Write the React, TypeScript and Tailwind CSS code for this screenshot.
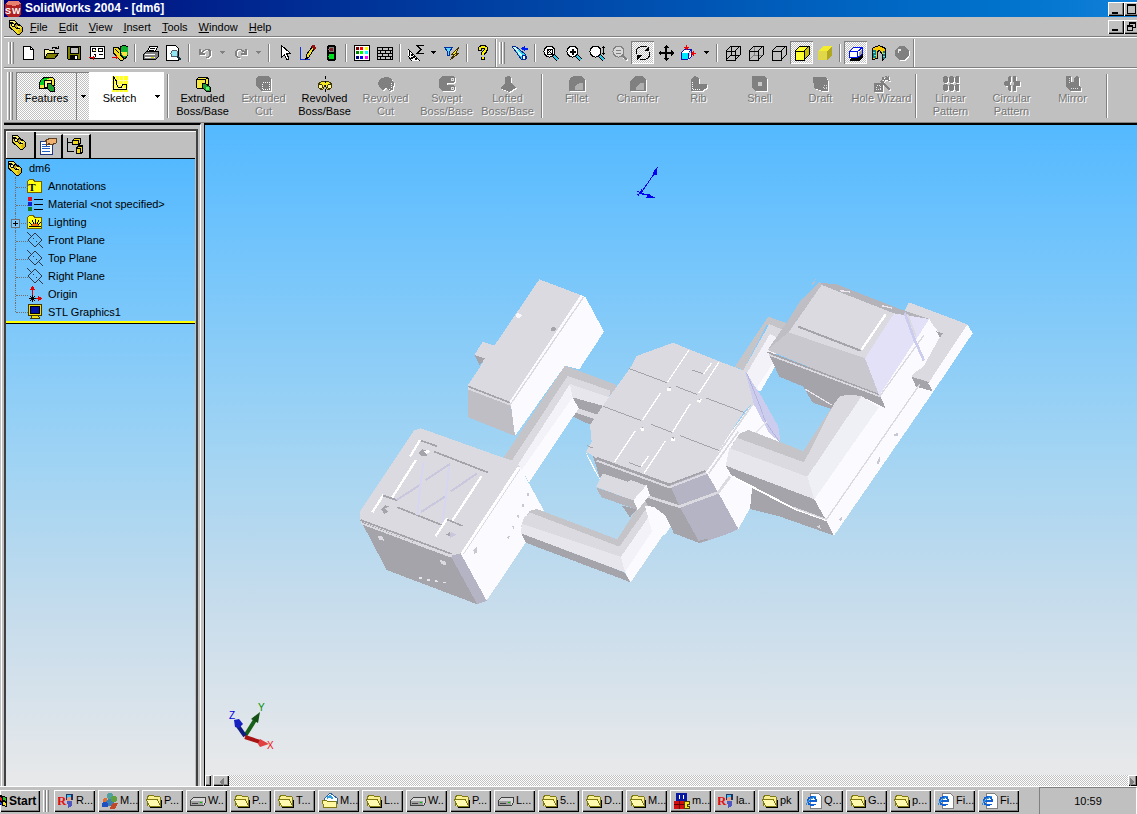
import React from "react";
import type { ReactNode } from "react";

const DITHER =
  "[background-image:repeating-conic-gradient(#ffffff_0_25%,#c0c0c0_0_50%)] bg-[length:2px_2px]";
const SKY =
  "[background-image:linear-gradient(to_bottom,#54b9ff_0%,#77c6fb_22%,#a2d4f3_50%,#c6dcec_73%,#e6e8ea_98%)]";
const RAISED =
  "bg-[#c0c0c0] shadow-[inset_1px_1px_0_#ffffff,inset_-1px_-1px_0_#000000,inset_-2px_-2px_0_#808080]";

type P = { children?: ReactNode };

function Ico({ children, size = 16 }: P & { size?: number }) {
  return (
    <svg
      width={size}
      height={size}
      viewBox="0 0 16 16"
      fill="none"
      stroke="none"
      shapeRendering="crispEdges"
      className="shrink-0"
      aria-hidden="true"
    >
      {children}
    </svg>
  );
}

/* ---------- shared glyphs ---------- */

const PartIcon = (
  <Ico>
    <path d="M1 1h5l3 3 5 4 1 4-3 3h-3L5 11 1 8z" fill="#f0dc20" stroke="#000" />
    <path d="M2 2l4 3 1 3-3-1zM8 8l4 2v4" fill="#fff68a" stroke="#000" />
    <path d="M8 4l3 3-2 3-3-3z" fill="#c0a010" stroke="#000" />
    <path d="M2 2h3l2 2M9 7l3 2" stroke="#fff68a" />
    <path d="M10 11l4-2v3l-3 3z" fill="#d8b810" />
  </Ico>
);

const cubeEdges = "M1 6h9v9h-9zM1 6l5-5h9v9l-5 5M10 6l5-5";

const magnifier = (inner: ReactNode) => (
  <Ico>
    <path d="M10 10l5 5" stroke="#000" strokeWidth="3" />
    <path d="M10 10l5 5" stroke="#30c8e8" strokeWidth="2" />
    <circle cx="6.500" cy="6.500" r="5.500" fill="#fff" stroke="#000" />
    {inner}
  </Ico>
);

/* ---------- standard toolbar ---------- */

const NewIcon = (
  <Ico>
    <path d="M3.500 1.500h7l3 3v10h-10z" fill="#fff" stroke="#000" />
    <path d="M10.500 1.500v3h3" stroke="#000" />
  </Ico>
);
const OpenIcon = (
  <Ico>
    <path d="M1.500 13.500v-9h4l1 1h5v3" fill="#ffffa0" stroke="#000" />
    <path d="M1.500 13.500l3-5h11l-4 5z" fill="#808000" stroke="#000" />
    <path d="M9 3.500q3-3 5 0M12 3.500h3v-3" stroke="#000" />
  </Ico>
);
const SaveIcon = (
  <Ico>
    <path d="M1.500 1.500h13v13h-12l-1-1z" fill="#808000" stroke="#000" />
    <path d="M4 2h8v6H4z" fill="#c0c0c0" stroke="#000" />
    <path d="M4 10h8v4H4z" fill="#000" />
    <path d="M9 11h2v3H9z" fill="#fff" />
  </Ico>
);
const DrawingIcon = (
  <Ico>
    <path d="M1.500 1.500h14v12h-14z" fill="#fff" stroke="#000" />
    <path d="M3.500 3.500h3v3h-3zM9.500 3.500h4v3h-4zM9.500 9.500h4M4.500 9.500h2v2" stroke="#000" />
    <path d="M6 5h1v1H6z" fill="#e0c000" />
    <path d="M0 12.500h6M4.500 11v4" stroke="#e00000" />
  </Ico>
);
const AssemblyIcon = (
  <Ico>
    <path d="M1 2h5l3 4 3 5-1 4H8L4 11 1 7z" fill="#f0dc20" stroke="#000" />
    <path d="M8 2l4-2 4 2v8l-3 4-4-3z" fill="#10b030" stroke="#000" />
    <path d="M9 7h6v4h-4z" fill="#ffe040" />
    <path d="M3 4l4 4M8 9l3 4" stroke="#000" />
    <path d="M0 12.500h6M4.500 10v4" stroke="#e00000" />
  </Ico>
);
const PrintIcon = (
  <Ico>
    <path d="M4.500 6.500l2-5h8l-2 5" fill="#fff" stroke="#000" />
    <path d="M7 3h5M6 5h5" stroke="#000" />
    <path d="M0.500 9.500l3-3h12v5l-3 3h-12z" fill="#808080" stroke="#000" />
    <path d="M2 9h10M2 12h10" stroke="#fff" />
    <path d="M8 12h3v1H8z" fill="#e0e000" />
  </Ico>
);
const PreviewIcon = (
  <Ico>
    <path d="M0.500 0.500h9l3 3v12h-12z" fill="#fff" stroke="#000" />
    <path d="M11 11l4 4" stroke="#103040" strokeWidth="2" />
    <circle cx="8.500" cy="8.500" r="3.500" fill="#90e8f0" stroke="#506070" />
  </Ico>
);
const undoShape = (
  <path d="M2 4h2v3l2-2 3-1h3l2 2v4l-2 3h-3v-1h2l1-2V7l-1-2H9L6 7 5 8h3v2H2z" />
);
const UndoIcon = (
  <Ico>
    <g transform="translate(1 1)" fill="#fff">
      {undoShape}
    </g>
    <g fill="#808080">{undoShape}</g>
  </Ico>
);
const RedoIcon = (
  <Ico>
    <g transform="matrix(-1 0 0 1 17 1)" fill="#fff">
      {undoShape}
    </g>
    <g transform="matrix(-1 0 0 1 16 0)" fill="#808080">
      {undoShape}
    </g>
  </Ico>
);
const SelectIcon = (
  <Ico>
    <path d="M4.500 0.500v12l3-3 2 5h2v-2l-2-4h4z" fill="#fff" stroke="#000" />
  </Ico>
);
const SketchPencil = (
  <Ico>
    <path d="M.500 2v12.500h9" stroke="#1030d0" />
    <path d="M6 14l1-5 5-7 2 2-5 8z" fill="#f0e020" stroke="#000" />
    <path d="M12 0h3l1 3-2 2-3-3z" fill="#901010" />
    <path d="M5 15l1-4 3 2z" fill="#000" />
  </Ico>
);
const TrafficIcon = (
  <Ico>
    <rect x="4" y="0" width="9" height="16" rx="3" fill="#000" />
    <circle cx="8.500" cy="4.500" r="2.500" fill="#802020" stroke="#808080" />
    <circle cx="8.500" cy="11.500" r="3" fill="#00e020" />
  </Ico>
);
const ColorsIcon = (
  <Ico>
    <path d="M.500 .500h15v15H.500z" fill="#fff" stroke="#000" />
    {[
      ["#800000", 2, 2], ["#ff0000", 6, 2], ["#ffff00", 11, 2],
      ["#008000", 2, 6], ["#00ff00", 6, 6], ["#00ffff", 11, 6],
      ["#000080", 2, 11], ["#0000ff", 6, 11], ["#ff00ff", 11, 11],
    ].map(([c, x, y]) => (
      <rect key={String(c)} x={x} y={y} width="3" height="3" fill={String(c)} />
    ))}
  </Ico>
);
const BricksIcon = (
  <Ico>
    <path d="M.500 2.500h15v12H.500zM0 5.500h16M0 8.500h16M0 11.500h16M5.500 2v3M11.500 2v3M3.500 6v3M8.500 6v3M13.500 6v3M5.500 9v3M11.500 9v3M3.500 12v3M8.500 12v3M13.500 12v3" stroke="#000" />
  </Ico>
);
const MeasureIcon = (
  <Ico>
    <path d="M0 4l12 12H4l-4-5z" fill="#fff" />
    <path d="M0 4l12 12M1.500 5v6M0 11l4 5M3 9h1v1H3zM5 11h1v1H5zM3 12h1v1H3zM7 13h1v1H7z" stroke="#000" />
    <path d="M16 2V.500H9l4 4-4 4h7V7" stroke="#000" />
  </Ico>
);
const FilterIcon = (
  <Ico>
    <path d="M.500 2.500h8l-3 4v4h-2v-4z" fill="#60d8ff" stroke="#0030a0" />
    <path d="M15 2l-7 7h3l-5 6 9-7h-3z" fill="#f8e818" stroke="#403000" />
  </Ico>
);
const HelpIcon = (
  <Ico>
    <path d="M5 6V4q0-2 3-2t3 2q0 2-3 4v2M8 12v3" stroke="#000" strokeWidth="4" />
    <path d="M5 5V4q0-2 3-2t3 2q0 2-3 4v2M8 12v2" stroke="#f8f000" strokeWidth="2" />
  </Ico>
);

/* ---------- view toolbar ---------- */

const FlashIcon = (
  <Ico>
    <path d="M0 1h3l10 8 2 4-2 2-4-1z" fill="#30d0f0" stroke="#002890" />
    <path d="M2 2l8 9" stroke="#d0ffff" strokeWidth="2" />
    <path d="M9 3.500l4-3v2h3v2h-3v2z" fill="#0020f0" />
    <path d="M10 11l2-1 2 2-1 2h-2z" fill="#fff" stroke="#002890" />
  </Ico>
);
const ZoomFit = magnifier(<path d="M4 4h5v5H4zM4 4l5 5M9 4L4 9" stroke="#000" />);
const ZoomArea = magnifier(<path d="M7 4v6M4 7h6" stroke="#000" strokeWidth="2" />);
const ZoomInOut = magnifier(<path d="M14.500 1v9M13 2.500h3M13 8.500h3" stroke="#000" />);
const ZoomSel = (
  <Ico>
    <path d="M11 12l5 4" stroke="#fff" strokeWidth="2" />
    <path d="M10 10l5 5" stroke="#808080" strokeWidth="2" />
    <circle cx="6.500" cy="6.500" r="5.500" fill="#d8d8d8" stroke="#808080" />
    <path d="M4 5.500h5M4 8.500h5" stroke="#808080" />
  </Ico>
);
const RotateIcon = (
  <Ico>
    <path d="M1.500 8.500V5q3-5 10-3M14.500 7v4q-3 5-10 3" stroke="#000" />
    <path d="M14 1v5H9zM2 15v-5h5z" fill="#000" />
  </Ico>
);
const PanIcon = (
  <Ico>
    <path d="M8 2v12M2 8h12" stroke="#000" strokeWidth="2" />
    <path d="M8 0l3 3H5zM8 16l3-3H5zM0 8l3-3v6zM16 8l-3-3v6z" fill="#000" />
  </Ico>
);
const ViewIcon = (
  <Ico>
    <path d="M.500 7.500h7v7h-7z" fill="#00e8ff" stroke="#1010b0" />
    <path d="M.500 7.500l3-3h7l-3 3M7.500 14.500l3-3v-7" fill="#fff" stroke="#1010b0" />
    <path d="M5.500 0v4M15 8.500h-4" stroke="#f00000" />
    <path d="M3 2h5L5.500 5zM13 6v5l-3-2.500z" fill="#f00000" />
  </Ico>
);
const WireIcon = (
  <Ico>
    <path d={cubeEdges + "M6 1v9h9M6 10l-5 5"} stroke="#000" />
  </Ico>
);
const HiddenVisIcon = (
  <Ico>
    <path d="M6 1v9h9M6 10l-5 5" stroke="#808080" />
    <path d={cubeEdges} stroke="#000" />
  </Ico>
);
const HiddenRemIcon = (
  <Ico>
    <path d={cubeEdges} stroke="#000" />
  </Ico>
);
const ShadedEdges = (
  <Ico>
    <path d="M1 6l5-5h9v9l-5 5H1z" fill="#ffff30" />
    <path d="M10 6l5-5v9l-5 5z" fill="#c8c000" />
    <path d={cubeEdges} stroke="#000" />
  </Ico>
);
const ShadedIcon = (
  <Ico>
    <path d="M1 6l5-5h9v9l-5 5H1z" fill="#f4ec30" />
    <path d="M10 6l5-5v9l-5 5z" fill="#b0a820" />
    <path d="M1 6h9v9H1z" fill="#e0d848" />
  </Ico>
);
const ShadowIcon = (
  <Ico>
    <path d="M3 12h8l4-3v4l-4 3H2z" fill="#000" />
    <path d="M1.500 6.500h8v6h-8zM1.500 6.500l4-4h9v6l-5 4M9.500 6.500l5-4" fill="#fff" stroke="#0010f0" />
    <path d="M11 7l3-3v4l-3 3z" fill="#a0a0a0" />
  </Ico>
);
const SectionIcon = (
  <Ico>
    <path d="M1.500 3.500q5-4 9-2l4 2v9l-3 3v-6l-3-4-2 1v7l-5 1z" fill="#f8c800" stroke="#000" />
    <path d="M2 5h3v8H2zM12 6h2v8h-2z" fill="#108080" />
    <path d="M2 7h2M3 10h2M12 8h2M12 11h2" stroke="#40f0f0" />
  </Ico>
);
const SphereIcon = (
  <Ico>
    <circle cx="9" cy="9" r="7" fill="#fff" />
    <circle cx="8" cy="8" r="7" fill="#808080" />
    <path d="M4 4h3v2H5v2H4z" fill="#e8e8e8" />
  </Ico>
);

/* ---------- feature bar ---------- */

const FeaturesIcon = (
  <Ico>
    <path d="M0.500 9.500q0-8 7-8h6l2 2v6l-8 3h-7z" fill="#f4e840" stroke="#000" />
    <path d="M1 9q0-7 7-7h4q-6 1-7 7z" fill="#00d020" />
    <path d="M5.500 4.500h7v7h-7z" fill="#fff890" stroke="#000" />
    <path d="M8 7l4 1 3 3v4h-4l-3-3z" fill="#20a030" stroke="#000" />
  </Ico>
);
const SketchIcon = (
  <Ico>
    <path d="M0 0h16v16H0z" fill="#ffff20" />
    <path d="M3.500 0v16M7.500 0v16M11.500 0v16M0 4.500h16M0 8.500h16M0 12.500h16" stroke="#fff8a8" />
    <path d="M1.500 0v13.500h13V8.500h-4l-1 3h-3l-2-3V5l-3-4" stroke="#000" />
  </Ico>
);
const ExtrudeIcon = (
  <Ico>
    <path d="M1.500 3.500l2-2h9l1 2v6l-3 3h-8l-1-1z" fill="#f4e840" stroke="#000" />
    <path d="M1.500 3.500h9v9M10.500 3.500l2-2" stroke="#000" />
    <path d="M7 7l3 0 5 4v4h-4l-4-4z" fill="#20a030" stroke="#000" />
    <path d="M11 11h3v3h-3z" fill="#60f070" />
  </Ico>
);
const RevolveIcon = (
  <Ico>
    <path d="M1 10q1-5 7-5t7 5l-2 3h-3l-2-4-2 4H3z" fill="#f4e820" stroke="#403800" />
    <circle cx="3.500" cy="10.500" r="2" fill="#fff8a0" stroke="#403800" />
    <circle cx="12.500" cy="10.500" r="2" fill="#fff8a0" stroke="#403800" />
    <path d="M8.500 0v3M8.500 5v2M8.500 9v2M8.500 13v3" stroke="#000" />
  </Ico>
);

const GREY: Record<string, ReactNode> = {
  cut: (
    <>
      <path d="M0 2l2-2h10l3 3v12H6l-6-5z" fill="#808080" />
      <path d="M6.500 6.500h7v7h-7z" stroke="#fff" strokeDasharray="1 1" />
    </>
  ),
  revcut: (
    <>
      <path d="M0 7l3-5 5-1 5 1 3 5-1 7-4 1-3-4-2 3H4l-3-3z" fill="#808080" />
      <path d="M13.500 7v5M11.500 13v1" stroke="#fff" strokeDasharray="1 1" />
    </>
  ),
  swept: (
    <>
      <path d="M3 0h11l2 2v4l-3 1H8v2h6l2 2v3l-2 1H3l-3-4V4z" fill="#808080" />
      <path d="M12.500 2.500h2v2h-2zM12.500 11.500h2v2h-2z" stroke="#e0e0e0" />
    </>
  ),
  lofted: <path d="M5 1l3-1 3 1v6l5 5-7 4-9-4 5-4z" fill="#808080" />,
  fillet: (
    <>
      <path d="M0 15V6q1-6 7-6h5l4 4v11z" fill="#808080" />
      <path d="M6 14V11q1-4 8-4v7z" fill="#b0b0b0" />
    </>
  ),
  chamfer: (
    <>
      <path d="M0 15V5l5-5h7l4 4v11z" fill="#808080" />
      <path d="M6 14v-3l4-4h4v7z" fill="#b0b0b0" />
    </>
  ),
  rib: (
    <>
      <path d="M0 15V3l4-3 4 2v6h8v4l-5 3z" fill="#808080" />
      <path d="M1.500 6v7.500h8" stroke="#fff" strokeDasharray="1 1" />
    </>
  ),
  shell: (
    <>
      <path d="M0 0h12l3 3v12H4l-4-3z" fill="#808080" />
      <path d="M6 6h4v4H6z" fill="#c8c8c8" />
    </>
  ),
  draft: (
    <>
      <path d="M0 1h13l2 4v10H9l-8-3z" fill="#808080" />
      <path d="M10.500 9.500h3v3h-3z" stroke="#d8d8d8" strokeDasharray="1 1" />
    </>
  ),
  wizard: (
    <>
      <path d="M0 7h9v9H0z" fill="#808080" />
      <path d="M2.500 9.500h4v4h-4z" stroke="#e8e8e8" strokeDasharray="1 1" />
      <path d="M7 5l9 9M9 1v3M12 0l3 5M15 1l-5 3M8 6h2" stroke="#808080" strokeWidth="2" />
    </>
  ),
  linear: (
    <path d="M1 0h3v7H1zM7 0h3v7H7zM13 0h3v7h-3zM1 8h3v7H1zM7 8h3v7H7zM13 8h3v7h-3zM0 1h5v5H0zM6 1h5v5H6zM12 1h4v5h-4zM0 9h5v5H0zM6 9h5v5H6zM12 9h4v5h-4z" fill="#808080" />
  ),
  circular: (
    <path d="M4 1l1-1h2v6H5L4 5zM9 0h2l1 1v4l-1 1H9zM5 9h2v6H5l-1-1v-4zM9 9h2l1 1v4l-1 1H9zM1 5h5v5H1L0 9V6zM10 5h5l1 1v3l-1 1h-5z" fill="#808080" />
  ),
  mirror: (
    <>
      <path d="M1 0h5v6h3V2l3-2 2 2v8l2 1v4H5l-4-4z" fill="#808080" />
      <path d="M6 12.500h8M4.500 2v5" stroke="#e0e0e0" strokeDasharray="1 1" />
    </>
  ),
};

const greyIcon = (k: string) => (
  <span className="drop-shadow-[1px_1px_0_#ffffff]">
    <Ico>{GREY[k]}</Ico>
  </span>
);

/* ---------- small controls ---------- */

function Tool({ label, children, on }: P & { label: string; on?: boolean }) {
  return (
    <button
      type="button"
      aria-label={label}
      className={
        "flex h-[23px] w-[23px] shrink-0 items-center justify-center " +
        (on ? DITHER + " shadow-[inset_1px_1px_0_#808080,inset_-1px_-1px_0_#ffffff]" : "")
      }
    >
      {children}
    </button>
  );
}

function Caret({ grey }: { grey?: boolean }) {
  return (
    <svg width="5" height="3" viewBox="0 0 5 3" shapeRendering="crispEdges" aria-hidden="true">
      <path d="M0 0h5v1H0zM1 1h3v1H1zM2 2h1v1H2z" fill={grey ? "#808080" : "#000"} />
    </svg>
  );
}

function Drop({ label, grey }: { label: string; grey?: boolean }) {
  return (
    <button type="button" aria-label={label} className="flex h-[23px] w-[13px] shrink-0 items-center pl-1">
      <Caret grey={grey} />
    </button>
  );
}

function Sep({ tall }: { tall?: boolean }) {
  return (
    <div className="flex w-2 shrink-0 justify-center">
      <div className={"w-[2px] border-l border-[#808080] bg-white " + (tall ? "h-11" : "h-[18px]")} />
    </div>
  );
}

function Grip({ h }: { h: string }) {
  return (
    <div className="flex shrink-0">
      <div className={"w-[3px] border-r border-[#808080] border-l border-l-white " + h} />
      <div className={"w-[3px] border-r border-[#808080] border-l border-l-white " + h} />
    </div>
  );
}

function WinButton({ label, children }: P & { label: string }) {
  return (
    <button type="button" aria-label={label} className={"h-[14px] w-4 shrink-0 " + RAISED}>
      <svg width="16" height="14" viewBox="0 0 16 14" shapeRendering="crispEdges" fill="none" aria-hidden="true">
        {children}
      </svg>
    </button>
  );
}

function Feature({ icon, l1, l2, on }: { icon: ReactNode; l1: string; l2?: string; on?: boolean }) {
  return (
    <button
      type="button"
      disabled={!on}
      className={
        "flex w-[61px] shrink-0 flex-col items-center pt-[7px] leading-[13px] whitespace-nowrap " +
        (on ? "text-black" : "text-[#767676] [text-shadow:1px_1px_0_#ffffff]")
      }
    >
      {icon}
      <span>{l1}</span>
      {l2 && <span>{l2}</span>}
    </button>
  );
}

/* ---------- feature tree ---------- */

const PlaneIcon = (
  <Ico>
    <path d="M8 1l7 7-7 7-7-7z" stroke="#303848" />
    <path d="M0 0l4 4M12 12l4 4M6 6l1 1M9 9l1 1" stroke="#303848" />
  </Ico>
);
const folderShape = <path d="M.500 3.500l2-2h4l1 2h7v11H.500z" fill="#ffff10" stroke="#706000" />;

const TREE: { name: string; icon: ReactNode; plus?: boolean }[] = [
  {
    name: "Annotations",
    icon: (
      <Ico>
        {folderShape}
        <text x="5" y="13" textAnchor="middle" fontSize="11" fontWeight="bold" fontFamily="Liberation Serif, serif" fill="#000">
          T
        </text>
      </Ico>
    ),
  },
  {
    name: "Material <not specified>",
    icon: (
      <Ico>
        <path d="M7 3.500h9M7 8.500h9M7 13.500h9" stroke="#000" />
        <circle cx="3" cy="3" r="2.500" fill="#e01020" />
        <circle cx="3" cy="8" r="2.500" fill="#1020d0" />
        <circle cx="3" cy="13" r="2.500" fill="#108020" />
      </Ico>
    ),
  },
  {
    name: "Lighting",
    plus: true,
    icon: (
      <Ico>
        {folderShape}
        <path d="M4 13q0-4 4-4t4 4z" fill="#f07010" />
        <path d="M2 8l3 3M5 6l2 4M8 5v5M12 6l-2 4M14 8l-3 3M2 12.500h12" stroke="#000" />
      </Ico>
    ),
  },
  { name: "Front Plane", icon: PlaneIcon },
  { name: "Top Plane", icon: PlaneIcon },
  { name: "Right Plane", icon: PlaneIcon },
  {
    name: "Origin",
    icon: (
      <Ico>
        <path d="M5.500 10V2M8 12.500h5" stroke="#e00000" />
        <path d="M5.500 0l3 4h-6zM15 12.500l-4-3v6z" fill="#e00000" />
        <path d="M3 10l5 5M8 10l-5 5M5.500 9v7M2 12.500h7" stroke="#000" />
      </Ico>
    ),
  },
  {
    name: "STL Graphics1",
    icon: (
      <Ico>
        <path d="M1.500 .500h13v11h-13zM3.500 14.500l2-3h6l1 3z" fill="#f0e010" stroke="#403800" />
        <path d="M3.500 2.500h9v7h-9z" fill="#0010a0" stroke="#000" />
      </Ico>
    ),
  },
];

function FeatureTree() {
  return (
    <div className="pl-px text-[11px] leading-[18px]">
      <div className="flex h-[18px] items-center gap-[6px]">
        {PartIcon}
        <span>dm6</span>
      </div>
      <ul>
        {TREE.map((n, i) => (
          <li key={n.name} className="flex h-[18px] items-center">
            <span
              className={
                "relative ml-2 w-3 shrink-0 border-l border-dotted border-[#707070] " +
                (i === TREE.length - 1 ? "mb-[9px] h-[9px]" : "h-[18px]")
              }
            >
              <span
                className={
                  "absolute left-0 w-3 border-t border-dotted border-[#707070] " +
                  (i === TREE.length - 1 ? "top-[9px]" : "top-[10px]")
                }
              />
              {n.plus && (
                <svg
                  width="9"
                  height="9"
                  viewBox="0 0 9 9"
                  shapeRendering="crispEdges"
                  className="absolute top-[6px] -left-[5px]"
                  aria-hidden="true"
                >
                  <path d="M.500 .500h8v8h-8z" fill="#7cc8fc" stroke="#707070" />
                  <path d="M2 4.500h5M4.500 2v5" stroke="#000" />
                </svg>
              )}
            </span>
            {n.icon}
            <span className="pl-[5px] whitespace-nowrap">{n.name}</span>
          </li>
        ))}
      </ul>
    </div>
  );
}

/* ---------- 3D model ---------- */

type Facet = [string, string];
const Facets = ({ list }: { list: Facet[] }) => (
  <>
    {list.map(([fill, points]) => (
      <polygon key={fill + points} fill={fill} points={points} />
    ))}
  </>
);
const Strokes = ({ list }: { list: [string, number, string][] }) => (
  <g fill="none">
    {list.map(([c, w, d]) => (
      <path key={c + d} stroke={c} strokeWidth={w} d={d} />
    ))}
  </g>
);

const TOP = "#dbdae0";
const MID = "#c5c4c9";
const DARK = "#a5a4aa";
const LIT = "#fbfaff";
const SOFT = "#e7e6ec";
const PALE = "#f3f2f9";
const LAV = "#ccccee";

const leftFacets: Facet[] = [
  [TOP, "598,28 722,75 730,90 513,410 383,358 383,347 430,275 403,255 428,215 463,227"],
  [DARK, "403,255 435,265 419,287"],
  [LIT, "722,75 737,82 792,185 718,298 675,287 525,498 513,405 508,396"],
  ["#bfbec4", "383,355 513,408 525,498 385,442"],
  [MID, "487,568 675,287 830,345 815,378 683,318 515,580"],
  [TOP, "510,580 683,318 812,362 806,384 690,342 540,592"],
  [SOFT, "690,342 808,382 792,410 698,382"],
  [DARK, "698,382 790,408 775,435 714,414"],
  [TOP, "714,414 775,435 765,452 706,428"],
  [DARK, "706,428 765,448 752,465 700,440"],
  [PALE, "690,342 698,382 550,606 530,590"],
  [LIT, "698,382 716,415 567,637 545,600"],
  [LIT, "540,590 565,637 612,722 548,760 557,818 440,992 345,852"],
  [TOP, "60,725 222,482 243,475 495,565 525,575 540,590 360,855 335,865 62,760"],
  [DARK, "64,755 335,860 412,1003 140,900"],
  ["#b5b4c4", "332,858 362,850 440,992 412,1003"],
  [MID, "555,745 570,722 590,717 832,808 840,835"],
  [TOP, "552,742 572,728 838,830 843,862 543,770"],
  [SOFT, "546,762 843,860 855,907 543,790"],
  [DARK, "543,790 853,907 872,937 557,818"],
  [MID, "832,808 910,685 940,700 838,830"],
  [TOP, "838,830 930,700 965,712 843,860"],
  [PALE, "843,860 950,706 992,728 855,907"],
  [LIT, "855,907 978,720 990,765 872,937"],
];

const leftStrokes: [string, number, string][] = [
  [TOP, 4, "M730 82L512 402"],
  [DARK, 5, "M384 349L510 398"],
  [TOP, 4, "M383 356L512 405"],
  [DARK, 5, "M62 750L335 852"],
  [TOP, 5, "M64 760L335 861"],
  ["#ffffff", 6, "M535 592L365 850"],
  [TOP, 3, "M541 596L371 852"],
  ["#ffffff", 7, "M240 510L210 560M228 570L155 685M130 675L97 727M425 618L335 755M322 745L287 798"],
  [DARK, 5, "M243 512L292 529M283 545L445 608M130 677L175 692M172 712L305 765M320 748L368 768"],
  ["#c8c7dd", 6, "M170 690L243 643M257 630L330 582M243 726L318 678M333 664L410 611"],
  ["#d6d5f2", 6, "M250 575L242 640L232 735M327 590L318 678L307 760"],
];

const leftHoles: Facet[] = [
  ["#f8f8fc", "527,133 535,128 545,136 538,144 530,142"],
  [DARK, "632,176 640,170 650,174 645,184 634,183"],
  [DARK, "236,548 246,538 262,540 262,556 245,560"],
  ["#ffffff", "252,545 264,538 270,546 258,552"],
  [DARK, "124,718 134,706 150,708 146,724 132,732"],
  [TOP, "134,716 150,708 146,724"],
  [DARK, "318,794 330,785 334,800"],
  ["#c8c7dd", "332,786 350,794 330,805"],
  [TOP, "112,797 128,800 132,812 118,810"],
  [TOP, "300,870 316,874 320,886 304,882"],
  ["#c8c7d2", "400,840 412,830 412,846 402,854"],
  [SOFT, "236,922 246,922 248,928 238,928"],
  [SOFT, "262,926 270,928 270,932 262,932"],
  [SOFT, "286,930 294,932 294,936 286,936"],
  [SOFT, "310,935 318,936 318,940 310,940"],
  ["#c8c7d2", "562,670 567,670 566,678 561,678"],
  ["#c8c7d2", "546,702 553,702 552,710 547,710"],
  ["#c8c7d2", "532,735 538,734 538,744 533,744"],
  ["#c8c7d2", "517,768 523,766 523,776 518,776"],
  ["#c8c7d2", "502,800 509,798 508,808 503,808"],
];

const rightBack: Facet[] = [
  [MID, "45,290 145,140 215,165 195,195 140,165 70,300"],
  [TOP, "70,300 148,162 200,185 165,205 150,192 80,310"],
  [PALE, "80,310 150,192 170,202 165,290 120,365 95,350"],
  [LIT, "165,270 165,290 120,367 112,352"],
  [DARK, "250,350 300,340 380,380 333,417 278,398"],
  [DARK, "35,618 320,740 342,797 175,738 85,716"],
  [LIT, "758,190 640,365 342,797 315,745 283,688 400,400 478,378 560,200 628,150"],
  [TOP, "567,97 742,163 625,345 575,320 600,280 660,200 650,178 625,148 552,125"],
  [DARK, "575,320 625,336 638,364 588,350"],
  [LIT, "742,163 758,190 640,365 625,340"],
  [LIT, "628,147 660,200 610,290 480,378 540,250"],
  [DARK, "143,244 478,372 497,415 425,380 360,378 335,405 300,365 250,350 178,320"],
  ["#b4b3b9", "300,38 350,43 552,122 628,147 522,134 305,48"],
  ["#bfbec4", "300,36 243,90 205,150 143,240 210,190 308,46"],
  [TOP, "305,45 522,130 435,265 205,188"],
  ["#c9c8ce", "143,240 205,187 435,265 478,377"],
  ["#e2e1f7", "435,265 522,130 628,147 478,377"],
  ["#bfbec4", "272,48 288,26 284,40"],
  [DARK, "648,183 668,190 660,202"],
];

const rightBackStrokes: [string, number, string][] = [
  [DARK, 6, "M235 170L422 242"],
  ["#ffffff", 7, "M424 240L497 133"],
  [DARK, 4, "M143 246L478 374"],
  [TOP, 5, "M146 254L482 380"],
  [TOP, 4, "M480 378L612 195M318 750L600 342"],
  [LAV, 8, "M554 128L582 205L612 272"],
  [TOP, 5, "M562 132L588 200"],
  ["#e8e8ee", 4, "M360 62L390 66M485 107L515 114M255 357L335 405"],
];

const centerFacets: Facet[] = [
  [LIT, "550,395 590,455 632,518 560,530 540,715 505,777 445,668 400,600"],
  [LAV, "525,303 575,380 625,470 632,518 598,490 550,400"],
  ["#ffffff", "48,545 66,580 90,628 82,618 52,560"],
  [DARK, "68,555 300,636 330,712 390,820 312,790 300,762 240,700 88,620"],
  [DARK, "225,650 300,648 330,712 312,790 285,735 230,705"],
  ["#b5b4c4", "298,640 405,600 445,668 505,777 470,793 390,820 330,712"],
  [TOP, "310,218 355,237 450,275 525,303 550,395 520,428 408,603 298,640 80,565 48,545 65,515 60,465 100,405 180,295 200,258"],
  [LIT, "225,708 250,710 285,735 302,770 285,795 250,800"],
  [DARK, "155,706 200,718 180,742"],
  [TOP, "98,610 172,635 182,630 232,648 190,692 78,650"],
  ["#b4b3b9", "78,652 192,692 203,720 95,682"],
  [LIT, "190,690 230,645 240,675 203,720"],
];

const centerStrokes: [string, number, string][] = [
  [DARK, 5, "M80 563L298 643L408 602"],
  [TOP, 6, "M80 572L298 652L410 609"],
  [TOP, 8, "M235 680L328 710L445 667L480 620"],
  [TOP, 5, "M408 603L550 400M416 610L505 485"],
  ["#b4b3d8", 3, "M530 308L590 460L630 518"],
  [DARK, 3, "M178 296L290 338M318 349L380 373M408 384L522 427M100 409L214 452M243 463L306 487M330 497L448 542M367 300L400 312M178 578L212 591M50 527L70 535"],
  ["#ffffff", 4, "M357 240L293 336M447 277L386 370M272 368L218 450M361 401L307 487M196 482L133 577M286 513L222 610M424 280L400 313M236 558L213 590"],
  [SOFT, 4, "M555 490L590 455"],
  [DARK, 5, "M310 785L385 815L415 808"],
];

const centerHoles: Facet[] = [
  ["#ffffff", "290,355 304,352 302,364 292,362"],
  ["#ffffff", "380,390 396,387 390,398 382,396"],
  ["#ffffff", "211,475 223,472 222,484 213,482"],
  ["#ffffff", "302,505 315,503 313,515 304,513"],
  [DARK, "296,352 302,352 300,357"],
  [DARK, "386,387 392,387 390,393"],
  [DARK, "215,472 220,472 219,477"],
  [DARK, "306,502 312,502 310,507"],
];

const rightFront: Facet[] = [
  [MID, "35,525 60,490 85,480 250,543 252,577 50,505"],
  [TOP, "25,545 50,503 252,577 262,620 30,540"],
  [SOFT, "28,534 262,620 283,688 17,587"],
  [DARK, "17,587 283,688 318,750 36,618"],
  [MID, "250,543 335,412 345,405 252,577"],
  [TOP, "252,577 340,405 360,378 395,374 430,380 262,620"],
  ["#eff0f6", "262,620 425,378 480,415 283,688"],
  [LIT, "283,688 478,410 500,420 318,748"],
];

const rightHoles: Facet[] = [
  ["#c8c7d2", "520,494 536,488 534,498 524,500"],
  ["#c8c7d2", "471,578 479,560 480,572 474,584"],
  ["#c8c7d2", "358,748 366,738 368,748 362,754"],
  [TOP, "290,768 300,766 302,776 294,774"],
];

function ModelView() {
  return (
    <svg
      viewBox="0 0 932 650"
      preserveAspectRatio="xMinYMin meet"
      className="h-full w-full"
      shapeRendering="crispEdges"
      role="img"
      aria-label="dm6 model"
    >
      <g transform="translate(-205 -125)">
        <g transform="translate(340 270) scale(0.33333)">
          <Facets list={leftFacets} />
          <Strokes list={leftStrokes} />
          <Facets list={leftHoles} />
        </g>
        <g transform="translate(720 270) scale(0.33333)">
          <Facets list={rightBack} />
          <Strokes list={rightBackStrokes} />
        </g>
        <g transform="translate(570 270) scale(0.33333)">
          <Facets list={centerFacets} />
          <Strokes list={centerStrokes} />
          <Facets list={centerHoles} />
        </g>
        <g transform="translate(720 270) scale(0.33333)">
          <Facets list={rightFront} />
          <Strokes list={[["#ffffff", 6, "M38 620L220 715L318 750"], [TOP, 4, "M220 712L318 748"]]} />
          <Facets list={rightHoles} />
        </g>

        <g stroke="#0000f0" fill="#0000f0">
          <path d="M641 193L656 171M641 193L651 196" fill="none" />
          <path d="M657 168l-4 5 3 2zM653 197l-5-3-1 3z" />
          <path d="M637 191l7 4M642 189l-4 7M637 195l5-3" fill="none" />
        </g>

        <g fill="none" shapeRendering="auto">
          <path d="M245 736L255 720" stroke="#186018" strokeWidth="4" />
          <path d="M260 712l-9 7 7 4z" fill="#145014" />
          <path d="M245 736L238 726" stroke="#101c80" strokeWidth="4" />
          <path d="M234 720l5-1 4 5-4 4-4-1z" fill="#1820c0" />
          <path d="M245 737L260 742" stroke="#a81414" strokeWidth="4" />
          <path d="M269 744l-9 3-2-3 2-5z" fill="#e04040" />
        </g>
        <g fontFamily="Liberation Sans, Arial, sans-serif" fontSize="10">
          <text x="258" y="711" fill="#009000">Y</text>
          <text x="267" y="749" fill="#f01010">X</text>
          <text x="229" y="719" fill="#0000e0">Z</text>
        </g>
      </g>
    </svg>
  );
}

/* ---------- taskbar ---------- */

const folderOpen = (
  <>
    <path d="M1.500 12.500v-9l2-1h4l1 1h5l1 1v9" fill="#f8f090" stroke="#807810" />
    <path d="M.500 6.500h11l3 7h-11z" fill="#fffab0" stroke="#807810" />
    <path d="M4 14.500h11v-8" stroke="#000" />
  </>
);
const TASK_ICONS: Record<string, ReactNode> = {
  folder: <Ico>{folderOpen}</Ico>,
  mail: (
    <Ico>
      <path d="M2 6l6-6 7 5v5H4z" fill="#fff" stroke="#3060a0" />
      <path d="M5 5l3-2 3 3" stroke="#30a0e0" strokeWidth="2" />
      <path d="M.500 7.500h4l1 1h9v6h-13z" fill="#fff8a0" stroke="#807810" />
    </Ico>
  ),
  drive: (
    <Ico>
      <path d="M.500 7.500l3-3h12v5l-2 3H.500z" fill="#d8d8d8" stroke="#404040" />
      <path d="M1 8h12v4H1z" fill="#a0a0a0" />
      <path d="M2 10h6" stroke="#404040" />
      <path d="M10 9h2v1h-2z" fill="#00c000" />
    </Ico>
  ),
  rh: (
    <Ico>
      <path d="M8 1h7v6H8z" fill="#203060" />
      <path d="M9 2h4v3H9z" fill="#40c0f0" />
      <path d="M9 7l5 1v5l-4 2z" fill="#5058c0" />
      <circle cx="11" cy="6" r="2" fill="#e8a080" />
      <text x="-1" y="12" fontSize="13" fontWeight="bold" fontFamily="Liberation Serif, serif" fill="#e01010">
        R
      </text>
    </Ico>
  ),
  msn: (
    <Ico>
      <circle cx="8" cy="3" r="3" fill="#50a0a0" />
      <path d="M4 8q4-4 8 0v5H4z" fill="#4080b0" />
      <circle cx="3" cy="7" r="2" fill="#e07030" />
      <path d="M0 10q3-3 6 0v4H0z" fill="#2050c0" />
      <circle cx="12" cy="6" r="3" fill="#60a040" />
      <path d="M8 16q1-7 8-6l-3 6z" fill="#c04828" />
    </Ico>
  ),
  gift: (
    <Ico>
      <path d="M2 0h11v8H2z" fill="#0818a0" />
      <path d="M5.500 2v4M9.500 2v4" stroke="#fff" />
      <path d="M0 8h10v8H0z" fill="#d01010" />
      <path d="M5 8v8M0 11.500h10" stroke="#600000" />
      <path d="M11 8h4v3h-2v2h2v2h-5v-4z" fill="#f8e820" stroke="#504000" />
    </Ico>
  ),
  ie: (
    <Ico>
      <path d="M4.500 .500h8l3 3v12h-11z" fill="#fff" stroke="#808080" />
      <circle cx="6" cy="8" r="4" stroke="#1060d0" strokeWidth="2" />
      <path d="M3 8h7" stroke="#1060d0" strokeWidth="2" />
      <path d="M8 9h4v2H8z" fill="#fff" />
      <path d="M0 13Q-1 9 10 3" stroke="#2890e8" />
    </Ico>
  ),
};

const TASKS: [string, string][] = [
  ["rh", "R..."], ["msn", "M..."], ["folder", "P..."], ["drive", "W.."],
  ["folder", "P..."], ["folder", "T..."], ["mail", "M..."], ["folder", "L..."],
  ["drive", "W.."], ["folder", "P..."], ["drive", "L..."], ["folder", "5..."],
  ["folder", "D..."], ["folder", "M..."], ["gift", "m..."], ["rh", "la.."],
  ["folder", "pk"], ["ie", "Q..."], ["folder", "G..."], ["folder", "p..."],
  ["ie", "Fi..."], ["ie", "Fi..."],
];

const MENUS = ["File", "Edit", "View", "Insert", "Tools", "Window", "Help"];

export default function App() {
  return (
    <div className="flex h-screen flex-col overflow-hidden bg-[#c0c0c0] font-['Liberation_Sans',Arial,sans-serif] text-[11px] text-black">
      <div className="flex min-h-0 flex-1 flex-col border-l border-[#c0c0c0] pl-[3px] shadow-[inset_1px_0_0_#ffffff]">
        {/* title bar */}
        <header className="flex h-[17px] shrink-0 items-center bg-linear-to-r from-[#00007b] to-[#1080d8] pl-px">
          <Ico>
            <path d="M0 3l4-3h9l3 3v10l-3 3H3l-3-3z" fill="#b02020" />
            <path d="M0 3l4-3h9l3 3-7 2z" fill="#e88070" />
            <text x="0" y="13" fontSize="9" fontWeight="bold" fontFamily="Liberation Sans, sans-serif" fill="#fff">
              S
            </text>
            <text x="7" y="13" fontSize="9" fontWeight="bold" fontFamily="Liberation Sans, sans-serif" fill="#fff">
              W
            </text>
          </Ico>
          <h1 className="pb-px pl-1 text-xs leading-4 font-bold text-white">SolidWorks 2004 - [dm6]</h1>
          <div className="-mr-[3px] ml-auto flex">
            <WinButton label="Minimize">
              <path d="M4 10h6v2H4z" fill="#000" />
            </WinButton>
            <WinButton label="Maximize">
              <path d="M3.500 3v8.500h8V3M3 3h9" stroke="#000" />
              <path d="M3 2h9v2H3z" fill="#000" />
            </WinButton>
          </div>
        </header>

        {/* menu bar */}
        <nav className="flex h-5 shrink-0 items-center border-b border-[#808080] pl-1">
          {PartIcon}
          <div className="flex gap-[11px] pl-[6px]">
            {MENUS.map((m) => (
              <button key={m} type="button" className="leading-4">
                <span className="underline underline-offset-1">{m[0]}</span>
                {m.slice(1)}
              </button>
            ))}
          </div>
          <div className="-mr-[3px] ml-auto flex">
            <WinButton label="Minimize document">
              <path d="M4 9h6v2H4z" fill="#000" />
            </WinButton>
            <WinButton label="Restore document">
              <path d="M5.500 2.500h6v5h-6zM5 3h7" stroke="#000" />
              <path d="M3.500 5.500h5v5h-5z" fill="#c0c0c0" stroke="#000" />
              <path d="M3 6h6" stroke="#000" />
            </WinButton>
          </div>
        </nav>

        {/* standard + view toolbars */}
        <div className="flex h-[31px] shrink-0 items-center border-t border-b border-t-white border-b-[#808080] pl-1">
          <Grip h="h-[22px]" />
          <div className="mr-px ml-[2px] flex items-center">
            <Tool label="New">{NewIcon}</Tool>
            <Tool label="Open">{OpenIcon}</Tool>
            <Tool label="Save">{SaveIcon}</Tool>
            <Tool label="Make drawing">{DrawingIcon}</Tool>
            <Tool label="Make assembly">{AssemblyIcon}</Tool>
            <Sep />
            <Tool label="Print">{PrintIcon}</Tool>
            <Tool label="Print preview">{PreviewIcon}</Tool>
            <Sep />
            <Tool label="Undo">{UndoIcon}</Tool>
            <Drop label="Undo list" grey />
            <Tool label="Redo">{RedoIcon}</Tool>
            <Drop label="Redo list" grey />
            <Sep />
            <Tool label="Select">{SelectIcon}</Tool>
            <Tool label="Sketch">{SketchPencil}</Tool>
            <Tool label="Rebuild">{TrafficIcon}</Tool>
            <Sep />
            <Tool label="Edit color">{ColorsIcon}</Tool>
            <Tool label="Texture">{BricksIcon}</Tool>
            <Sep />
            <Tool label="Measure">{MeasureIcon}</Tool>
            <Drop label="Tools list" />
            <Tool label="Selection filter">{FilterIcon}</Tool>
            <Sep />
            <Tool label="Help">{HelpIcon}</Tool>
          </div>
          <div className="mr-[2px] h-7 w-[2px] shrink-0 border-l border-[#808080] bg-white" />
          <Grip h="h-[22px]" />
          <div className="ml-[3px] flex items-center">
            <Tool label="Previous view">{FlashIcon}</Tool>
            <Sep />
            <Tool label="Zoom to fit">{ZoomFit}</Tool>
            <Tool label="Zoom to area">{ZoomArea}</Tool>
            <Tool label="Zoom in or out">{ZoomInOut}</Tool>
            <Tool label="Zoom to selection">{ZoomSel}</Tool>
            <Tool label="Rotate view" on>{RotateIcon}</Tool>
            <Tool label="Pan">{PanIcon}</Tool>
            <Tool label="Standard views">{ViewIcon}</Tool>
            <Drop label="Standard views list" />
            <Sep />
            <Tool label="Wireframe">{WireIcon}</Tool>
            <Tool label="Hidden lines visible">{HiddenVisIcon}</Tool>
            <Tool label="Hidden lines removed">{HiddenRemIcon}</Tool>
            <Tool label="Shaded with edges" on>{ShadedEdges}</Tool>
            <Tool label="Shaded">{ShadedIcon}</Tool>
            <Sep />
            <Tool label="Shadows" on>{ShadowIcon}</Tool>
            <Tool label="Section view">{SectionIcon}</Tool>
            <Tool label="RealView">{SphereIcon}</Tool>
          </div>
          <div className="h-7 w-[2px] shrink-0 border-l border-[#808080] bg-white" />
        </div>

        {/* command manager */}
        <div className="flex h-[55px] shrink-0 border-t border-b border-t-white border-b-[#808080] pl-[3px]">
          <div className="pt-[3px]">
            <Grip h="h-12" />
          </div>
          <div className="mt-[3px] ml-[3px] flex h-12">
            <button
              type="button"
              className={"flex w-[61px] flex-col items-center border-t border-r border-l border-[#808080] pt-[3px] leading-[13px] " + DITHER}
            >
              {FeaturesIcon}
              <span>Features</span>
            </button>
            <button
              type="button"
              aria-label="Features list"
              className={"flex w-3 items-center justify-center border-t border-[#808080] " + DITHER}
            >
              <Caret />
            </button>
            <button type="button" className="flex w-[61px] flex-col items-center bg-white pt-1 leading-[13px]">
              {SketchIcon}
              <span>Sketch</span>
            </button>
            <button type="button" aria-label="Sketch list" className="flex w-[14px] items-center justify-center bg-white">
              <Caret />
            </button>
          </div>
          <div className="flex pt-[5px]">
            <Sep tall />
          </div>
          <Feature on icon={ExtrudeIcon} l1="Extruded" l2="Boss/Base" />
          <Feature icon={greyIcon("cut")} l1="Extruded" l2="Cut" />
          <Feature on icon={RevolveIcon} l1="Revolved" l2="Boss/Base" />
          <Feature icon={greyIcon("revcut")} l1="Revolved" l2="Cut" />
          <Feature icon={greyIcon("swept")} l1="Swept" l2="Boss/Base" />
          <Feature icon={greyIcon("lofted")} l1="Lofted" l2="Boss/Base" />
          <div className="flex pt-[5px]">
            <Sep tall />
          </div>
          <Feature icon={greyIcon("fillet")} l1="Fillet" />
          <Feature icon={greyIcon("chamfer")} l1="Chamfer" />
          <Feature icon={greyIcon("rib")} l1="Rib" />
          <Feature icon={greyIcon("shell")} l1="Shell" />
          <Feature icon={greyIcon("draft")} l1="Draft" />
          <Feature icon={greyIcon("wizard")} l1="Hole Wizard" />
          <div className="flex pt-[5px]">
            <Sep tall />
          </div>
          <Feature icon={greyIcon("linear")} l1="Linear" l2="Pattern" />
          <Feature icon={greyIcon("circular")} l1="Circular" l2="Pattern" />
          <Feature icon={greyIcon("mirror")} l1="Mirror" />
          <div className="flex pt-[5px]">
            <Sep tall />
          </div>
        </div>

        {/* work area */}
        <div className="flex min-h-0 flex-1">
          <aside className="mr-[3px] flex w-[197px] shrink-0 flex-col border-t-2 border-r border-t-black border-r-white pt-1 pr-[2px]">
            <div className="flex min-h-0 flex-1 flex-col border-t-2 border-r-2 border-l-2 border-t-[#404040] border-r-[#404040] border-l-[#404040]">
              <div className="flex h-[27px] shrink-0 items-end border-t border-white">
                <button
                  type="button"
                  aria-label="Feature manager"
                  className="flex h-[26px] w-[30px] items-center justify-center border-r-2 border-l border-r-black border-l-white pr-1 pb-[6px]"
                >
                  {PartIcon}
                </button>
                <button
                  type="button"
                  aria-label="Property manager"
                  className="flex h-6 w-[27px] items-center justify-center border-t border-r-2 border-t-white border-r-black pr-[2px] pb-[2px]"
                >
                  <Ico size={18}>
                    <path d="M1 4h11v12H1z" fill="#fff" stroke="#203880" />
                    <path d="M3 8.500h7M3 10.500h7M3 12.500h7M3 6.500h4" stroke="#2060c0" />
                    <path d="M6 3l4-2h6v4l-5 2-2-1-2 1z" fill="#f0b070" stroke="#604020" />
                  </Ico>
                </button>
                <button
                  type="button"
                  aria-label="Configuration manager"
                  className="flex h-6 w-7 items-center justify-center border-t border-r-2 border-t-white border-r-black pr-[2px] pb-[2px]"
                >
                  <Ico size={18}>
                    <path d="M1.500 1v11.500h6M1.500 4.500h4" stroke="#000" />
                    <path d="M6 3l2-2h5v4l-2 2H6zM9 10l2-2h4v5l-2 2H9z" fill="#f0d820" stroke="#000" />
                    <path d="M6 3h5v4M9 10h4v5" stroke="#000" />
                  </Ico>
                </button>
              </div>
              <div className={"mr-px min-h-0 flex-1 border-t border-black " + SKY}>
                <FeatureTree />
                <div className="h-[3px] border-b border-black bg-[#ffff00]" />
              </div>
            </div>
          </aside>

          <main className="flex min-w-0 flex-1 flex-col border-t-2 border-l border-black">
            <div className={"min-h-0 flex-1 " + SKY}>
              <ModelView />
            </div>
            <div className="flex h-[11px] shrink-0 overflow-hidden">
              <div className={"mr-[2px] w-[6px] " + RAISED} />
              <button type="button" aria-label="Scroll left" className={"flex w-4 justify-center pt-[3px] " + RAISED}>
                <svg width="5" height="8" viewBox="0 0 5 8" shapeRendering="crispEdges" aria-hidden="true">
                  <path d="M5 0v8L0 4z" fill="#808080" />
                </svg>
              </button>
              <div className={"flex-1 " + DITHER} />
              <button type="button" aria-label="Scroll right" className={"flex w-[9px] justify-center pt-[3px] " + RAISED}>
                <svg width="5" height="8" viewBox="0 0 5 8" shapeRendering="crispEdges" aria-hidden="true">
                  <path d="M0 0v8l5-4z" fill="#808080" />
                </svg>
              </button>
            </div>
          </main>
        </div>
      </div>

      {/* taskbar */}
      <footer className="flex h-7 shrink-0 items-center border-t border-white">
        <button type="button" className={"flex h-[22px] w-10 items-center gap-px overflow-hidden text-xs font-bold " + RAISED}>
          <svg width="8" height="14" viewBox="0 0 8 14" shapeRendering="crispEdges" className="shrink-0" aria-hidden="true">
            <path d="M0 1l7 2v10l-7-2z" fill="#000" />
            <path d="M0 3l2 1v3l-2-1z" fill="#e02020" />
            <path d="M3 3l3 1v3l-3-1z" fill="#20c020" />
            <path d="M0 8l2 1v2l-2-1z" fill="#2040f0" />
            <path d="M3 8l3 1v3l-3-1z" fill="#f0e020" />
          </svg>
          Start
        </button>
        <div className="mr-[5px] ml-[3px]">
          <Grip h="h-[22px]" />
        </div>
        <div className="flex gap-[3px]">
          {TASKS.map(([icon, label], i) => (
            <button
              key={i}
              type="button"
              className={"flex h-[22px] w-[41px] items-center gap-[2px] overflow-hidden pl-1 whitespace-nowrap " + RAISED}
            >
              {TASK_ICONS[icon]}
              <span>{label}</span>
            </button>
          ))}
        </div>
        <div className="ml-auto flex h-full w-[98px] items-center justify-center border-t border-r border-l border-t-[#808080] border-r-white border-l-[#808080]">
          <time>10:59</time>
        </div>
      </footer>
    </div>
  );
}
